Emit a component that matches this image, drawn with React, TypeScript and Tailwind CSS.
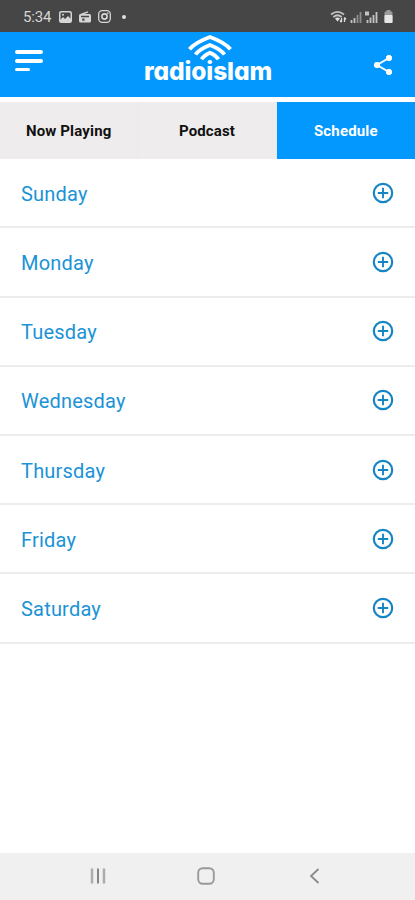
import React, { useState } from "react";

const days = [
  "Sunday",
  "Monday",
  "Tuesday",
  "Wednesday",
  "Thursday",
  "Friday",
  "Saturday",
];

const tabs = ["Now Playing", "Podcast", "Schedule"];

function StatusBar() {
  return (
    <div className="flex h-8 w-full shrink-0 items-center justify-between bg-[#464646] pl-[23px] pr-[21px] text-[#d6d6d6]">
      <div className="flex items-center pt-px">
        <span className="w-[36px] text-[15px] leading-4 tracking-[-0.2px]">
          5:34
        </span>
        <svg width="13" height="12" viewBox="0 0 13 12" fill="none">
          <rect x="0.75" y="0.75" width="11.5" height="10.5" rx="1.5" stroke="currentColor" strokeWidth="1.5" />
          <path d="M1 11V9l3-3 2 2 3-3 3 3v3z" fill="currentColor" />
          <circle cx="4" cy="3.8" r="1" fill="currentColor" />
        </svg>
        <svg className="ml-[7px]" width="12" height="12" viewBox="0 0 12 12" fill="none">
          <path d="M2 3.5L9 0.8" stroke="currentColor" strokeWidth="1.4" />
          <path
            fillRule="evenodd"
            d="M1.5 3h9A1.5 1.5 0 0 1 12 4.5V10A1.5 1.5 0 0 1 10.5 11.5h-9A1.5 1.5 0 0 1 0 10V4.5A1.5 1.5 0 0 1 1.5 3zM2 4.8v1.5h8V4.8zM3.3 7.5v2.2h2.2V7.5z"
            fill="currentColor"
          />
        </svg>
        <svg className="ml-[7px]" width="13" height="13" viewBox="0 0 13 13" fill="none" stroke="currentColor">
          <rect x="0.7" y="0.7" width="11.6" height="11.6" rx="3.5" strokeWidth="1.3" />
          <circle cx="6.5" cy="6.5" r="2.6" strokeWidth="1.6" />
          <circle cx="9.8" cy="3.2" r="0.5" />
        </svg>
        <span className="ml-[11px] h-[4px] w-[4px] rounded-full bg-[#dedede]" />
      </div>
      <div className="flex items-center gap-[5px] pt-px">
        <svg width="49" height="14" viewBox="0 0 49 14" fill="none">
          <path d="M1 4.5Q7.5 -0.8 14 4.5M3.3 7Q7.5 3.5 11.7 7" stroke="#c4c4c4" strokeWidth="1.7" />
          <path d="M5 8.5Q7.5 6.5 10 8.5L7.5 11.5z" fill="#dedede" />
          <path d="M11.5 12V8M10 10.5l1.5 1.7M14.5 12V7.5M14.5 7.5L16 9.3" stroke="#dedede" strokeWidth="1.3" />
          <path d="M21.5 13v-3M24.5 13V8" stroke="#c4c4c4" strokeWidth="1.8" />
          <path d="M27.5 13V5M30.5 13V2" stroke="#8e8e8e" strokeWidth="1.8" />
          <path d="M35 1.5h4v4h-4z" fill="#c4c4c4" />
          <path d="M37.5 13v-3M40.5 13V7.5M43.5 13V5M46.5 13V2" stroke="#c4c4c4" strokeWidth="1.8" />
        </svg>
        <svg className="mr-px" width="9" height="13" viewBox="0 0 9 13">
          <rect x="2.5" y="0" width="4" height="3" fill="#9a9a9a" />
          <rect x="0.5" y="1.5" width="8" height="11.5" rx="1.2" fill="#9a9a9a" />
          <rect x="0.5" y="5" width="8" height="8" rx="1" fill="#e6e6e6" />
        </svg>
      </div>
    </div>
  );
}

function Logo() {
  return (
    <div className="flex w-[134px] flex-col items-center pt-[2px] text-white">
      <svg className="ml-[3px] shrink-0" width="46" height="28" viewBox="0 0 46 28" fill="none" stroke="currentColor" strokeWidth="3.8">
        <path d="M2.5 15.3Q8 8.500 23 3Q38 8.500 43.500 15.300" />
        <path d="M8.5 20.500Q12 15.500 23 11Q34 15.500 37.500 20.500" />
        <path d="M14.5 25.300Q17 21.500 23 18.800Q29 21.500 31.500 25.300" />
      </svg>
      <span className="-mt-[3px] font-['Inter'] text-[24.5px] font-extrabold leading-6 tracking-[-0.1px] [font-feature-settings:'cv11']">
        radioislam
      </span>
    </div>
  );
}

function Header() {
  return (
    <div className="flex h-[65px] w-full shrink-0 items-start justify-between bg-[#0398fd] pl-[15px] pr-[22px]">
      <div className="flex w-[28px] flex-col gap-[5px] pt-[18px]">
        <div className="h-[4px] w-[28px] rounded-sm bg-white" />
        <div className="h-[4px] w-[28px] rounded-sm bg-white" />
        <div className="h-[3px] w-[15px] rounded-sm bg-white" />
      </div>
      <Logo />
      <svg className="mt-[22px]" width="20" height="22" viewBox="0 0 20 22" fill="white" stroke="white">
        <path d="M16 4L4 11l12 7" fill="none" strokeWidth="2" />
        <circle cx="16" cy="4" r="2.7" />
        <circle cx="4" cy="11" r="2.7" />
        <circle cx="16" cy="18" r="2.7" />
      </svg>
    </div>
  );
}

function PlusIcon() {
  return (
    <svg width="22" height="22" viewBox="0 0 22 22" fill="none" stroke="#1685c5">
      <circle cx="11" cy="11" r="9.2" strokeWidth="2.2" />
      <path d="M11 5.8v10.4M5.8 11h10.4" strokeWidth="1.9" />
    </svg>
  );
}

function NavigationBar() {
  return (
    <div className="mt-auto flex h-[47px] w-full shrink-0 items-center bg-[#f0f0f0] pb-[2px] pl-[90px]">
      <svg width="16" height="16" viewBox="0 0 16 16" fill="none">
        <path d="M2 0.5v15M14 0.5v15" stroke="#acacac" strokeWidth="2.5" />
        <path d="M8 0.5v15" stroke="#858585" strokeWidth="2" />
      </svg>
      <svg className="ml-[91px]" width="18" height="18" viewBox="0 0 18 18" fill="none">
        <rect x="1.2" y="1.2" width="15.6" height="15.6" rx="4.5" stroke="#999" strokeWidth="1.9" />
      </svg>
      <svg className="ml-[94px]" width="11" height="16" viewBox="0 0 11 16" fill="none">
        <path d="M9.5 1L2 8l7.5 7" stroke="#8a8a8a" strokeWidth="1.8" />
      </svg>
    </div>
  );
}

export default function App() {
  const [active, setActive] = useState("Schedule");

  return (
    <div className="flex h-[900px] w-[415px] flex-col overflow-hidden bg-white font-['Roboto',sans-serif]">
      <StatusBar />
      <Header />
      <div className="mt-[5px] grid h-[57px] w-full shrink-0 grid-cols-3">
        {tabs.map((tab) => (
          <button
            key={tab}
            onClick={() => setActive(tab)}
            className={`pt-[2px] text-[15px] font-bold tracking-[0.15px] ${
              active === tab
                ? "bg-[#0398fd] text-white"
                : "border-r border-[#eae8e8] bg-[#eeecec] text-[#111]"
            }`}
          >
            {tab}
          </button>
        ))}
      </div>
      <div className="flex flex-col pt-[0.3px]">
        {days.map((day) => (
          <div
            key={day}
            className="flex h-[69.2px] w-full items-center justify-between border-b-2 border-[#ededed] pl-[21px] pr-[21px]"
          >
            <span className="pt-[2px] text-[20px] leading-6 tracking-[0.2px] text-[#1b93d6]">
              {day}
            </span>
            <PlusIcon />
          </div>
        ))}
      </div>
      <NavigationBar />
    </div>
  );
}
